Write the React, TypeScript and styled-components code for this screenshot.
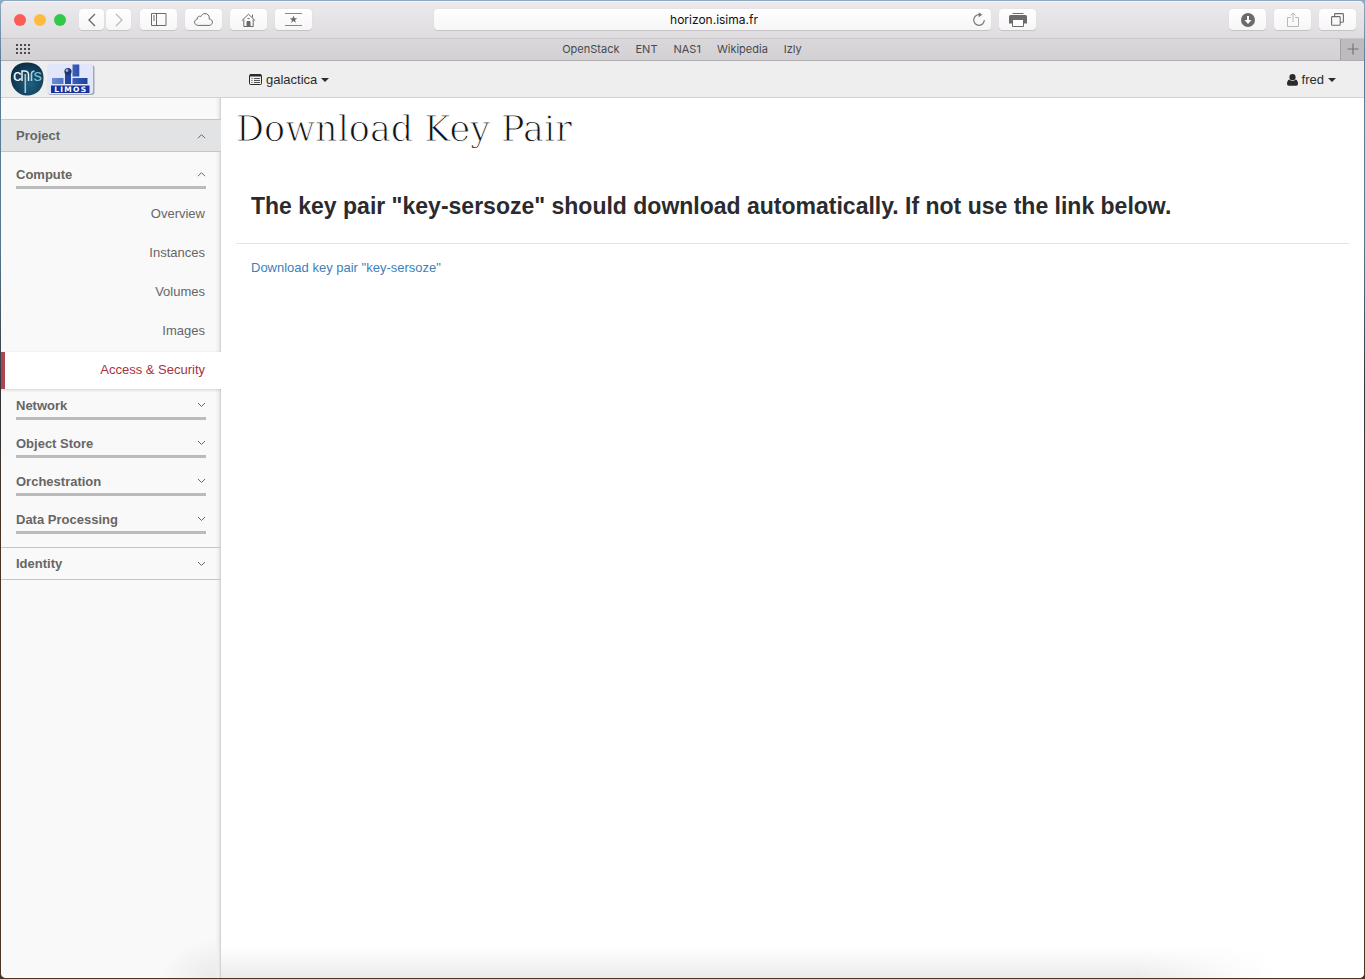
import React from "react";
import styled, { createGlobalStyle } from "styled-components";

const GlobalStyle = createGlobalStyle`
  *, *::before, *::after { box-sizing: border-box; }
  body {
    margin: 0;
    font-family: "Liberation Sans", Helvetica, Arial, sans-serif;
    font-size: 13px;
    line-height: 18px;
    color: #2b2b2d;
  }
  button, input { font: inherit; color: inherit; margin: 0; padding: 0; border: 0; background: none; }
  button { cursor: pointer; }
  a { text-decoration: none; color: inherit; }
  ul { list-style: none; margin: 0; padding: 0; }
  h1, h2, h3 { margin: 0; }
  svg { display: block; flex: none; }
`;

const Desktop = styled.div`
  min-height: 100vh;
  display: flex;
  padding: 1px;
  background: linear-gradient(#8fa9c0 0, #5b7f99 60px, #56788f 25%, #2f3338 40%, #4a3320 55%, #4b3626 100%);
`;

const BrowserWindow = styled.div`
  flex: 1;
  min-width: 0;
  display: flex;
  flex-direction: column;
  border-radius: 5px;
  overflow: hidden;
  background: #fff;
`;

const Toolbar = styled.div`
  display: flex;
  align-items: center;
  height: 37px;
  padding: 0 8px 0 13px;
  background: linear-gradient(#edeaed, #dfdcdf);
  box-shadow: inset 0 1px 0 #f6f5f6;
`;

const TrafficLights = styled.div`
  display: flex;
  gap: 8px;
  margin-right: 13px;
`;

const Light = styled.button<{ $color: string }>`
  width: 12px;
  height: 12px;
  border-radius: 50%;
  background: ${(p) => p.$color};
`;

const ButtonGroup = styled.div`
  display: flex;
  gap: 8px;
`;

const HistoryButtons = styled(ButtonGroup)`
  gap: 2px;
  margin-right: 1px;
`;

const ToolButton = styled.button<{ $narrow?: boolean; $muted?: boolean }>`
  display: flex;
  align-items: center;
  justify-content: center;
  width: ${(p) => (p.$narrow ? 25 : 37)}px;
  height: 21px;
  border-radius: 4px;
  color: ${(p) => (p.$muted ? "#b9b8ba" : "#6b6a6d")};
  background: linear-gradient(#fff, #f7f6f7);
  box-shadow: 0 1px 0 #c6c3c6, 0 0 1px #c9c6c9;
`;

const AddressField = styled.form`
  flex: 1;
  display: flex;
  align-items: center;
  height: 21px;
  margin: 0 8px 0 122px;
  padding: 0 5px 0 22px;
  border-radius: 4px;
  background: linear-gradient(#fff, #f7f6f7);
  box-shadow: 0 1px 0 #c6c3c6, 0 0 1px #c9c6c9;
`;

const AddressInput = styled.input`
  flex: 1;
  min-width: 0;
  height: 21px;
  text-align: center;
  color: #111;
  font-family: Inter, sans-serif;
  font-size: 12px;
  outline: none;
`;

const ReloadButton = styled.button`
  color: #77767a;
`;

const RightTools = styled(ButtonGroup)`
  margin-left: 193px;
`;

const BookmarksBar = styled.div`
  display: flex;
  align-items: stretch;
  height: 23px;
  background: linear-gradient(#dad7da, #d4d1d5);
  border-top: 1px solid #cac7ca;
  border-bottom: 1px solid #afadb0;
`;

const GridButton = styled.button`
  width: 24px;
  margin-left: 14px;
  padding-bottom: 2px;
  color: #4a494c;
`;

const Bookmarks = styled.nav`
  flex: 1;
  display: flex;
  justify-content: center;
  align-items: center;
  gap: 16px;
  margin-right: 15px;
  padding-bottom: 2px;
  font-family: Inter, sans-serif;
  font-size: 11px;
  color: #49484b;
`;

const NewTabButton = styled.button`
  display: flex;
  align-items: center;
  justify-content: center;
  width: 24px;
  padding-bottom: 2px;
  background: #bebbbf;
  border-left: 1px solid #a19fa2;
  color: #747376;
`;

const NavBar = styled.header`
  display: flex;
  align-items: center;
  height: 37px;
  padding: 0 28px 0 9px;
  background: #eee;
  border-bottom: 1px solid #d2d2d3;
`;

const Brand = styled.a`
  display: flex;
  gap: 2px;
  width: 239px;
`;

const MenuButton = styled.button<{ $end?: boolean }>`
  display: flex;
  align-items: center;
  gap: 4px;
  padding-top: 1px;
  margin-left: ${(p) => (p.$end ? "auto" : "0")};
`;

const Columns = styled.div`
  flex: 1;
  display: flex;
`;

const Sidebar = styled.nav`
  width: 220px;
  flex: none;
  padding-top: 21px;
  color: #666;
  background:
    linear-gradient(to left, #c4c4c4 0, #e3e3e3 1px, #f1f1f1 3px, rgba(249, 249, 249, 0) 6px),
    radial-gradient(60px 40px at bottom right, #e9e9e9, rgba(249, 249, 249, 0)),
    #f9f9f9;
`;

const SectionHeader = styled.button<{ $active?: boolean }>`
  display: flex;
  justify-content: space-between;
  align-items: center;
  width: 100%;
  height: 33px;
  padding: 1px 15px 0;
  font-weight: bold;
  border-top: 1px solid #c5c6c7;
  border-bottom: 1px solid #c5c6c7;
  background: ${(p) => (p.$active ? "#e2e3e5" : "transparent")};
`;

const Groups = styled.div`
  padding-top: 6px;
  padding-bottom: 6px;
`;

const GroupHeader = styled.button`
  display: flex;
  justify-content: space-between;
  align-items: center;
  width: 190px;
  height: 31px;
  margin: 0 15px 7px;
  padding-top: 5px;
  font-weight: bold;
  border-bottom: 3px solid #bbb;
`;

const Item = styled.a<{ $active?: boolean }>`
  display: block;
  height: ${(p) => (p.$active ? 37 : 39)}px;
  padding-right: 16px;
  line-height: 36px;
  text-align: right;
  color: ${(p) => (p.$active ? "#a5323e" : "#666")};
  background: ${(p) => (p.$active ? "#fff" : "transparent")};
  border-left: 4px solid ${(p) => (p.$active ? "#ad4450" : "transparent")};
  box-shadow: ${(p) => (p.$active ? "0 1px 3px rgba(0, 0, 0, 0.16)" : "none")};
  clip-path: ${(p) => (p.$active ? "inset(-1px 0 -4px 0)" : "none")};
`;

const Content = styled.main`
  flex: 1;
  min-width: 0;
  padding: 0 15px;
  background:
    linear-gradient(to right, rgba(255, 255, 255, 0) 80%, #fff 92%) bottom / 100% 32px no-repeat,
    linear-gradient(#fff, #ebebeb) bottom / 100% 32px no-repeat,
    #fff;
`;

const PageTitle = styled.h1`
  font-family: "DejaVu Serif", serif;
  font-size: 35px;
  font-weight: normal;
  line-height: 62px;
  color: #111;
  -webkit-text-stroke: 1px #fff;
`;

const ModalHeader = styled.div`
  padding: 29px 15px 20px;
  border-bottom: 1px solid #e5e5e5;
`;

const ModalTitle = styled.h2`
  font-size: 23px;
  line-height: 34px;
  color: #2b2b2d;
`;

const ModalBody = styled.div`
  padding: 15px;
`;

const DownloadLink = styled.a`
  color: #3c7fbb;
`;

const line = { fill: "none", stroke: "currentColor" } as const;

const Chevron = ({ up }: { up?: boolean }) => (
  <svg width="9" height="7" viewBox="0 0 9 7" {...line}>
    <path d={up ? "M1 5.200 4.500 1.700 8 5.200" : "M1 1 4.500 4.500 8 1"} />
  </svg>
);

const Caret = () => (
  <svg width="8" height="4" viewBox="0 0 8 4" fill="currentColor">
    <path d="M0 0h8L4 4z" />
  </svg>
);

const CnrsLogo = () => (
  <svg width="34" height="34" viewBox="0 0 34 34" role="img" aria-label="CNRS">
    <defs>
      <radialGradient id="cnrs" cx="60%" cy="65%" r="65%">
        <stop offset="0" stopColor="#1d6080" />
        <stop offset="1" stopColor="#0d2f49" />
      </radialGradient>
    </defs>
    <path d="M17 .5C27 .5 33.5 6 33.5 16 33.5 27 27 33.5 17 33.5 8 33.5 1 26 .8 16 .7 6 7 .5 17 .5z" fill="url(#cnrs)" />
    <text x="3" y="19" fontFamily="Liberation Sans, sans-serif" fontSize="17" fill="#fff">c</text>
    <path d="M12 19v-10h2.500q4 0 4 4V19" fill="none" stroke="#e7f3f7" strokeWidth="1.5" />
    <path d="M15.300 12v19" stroke="#a3c8d8" strokeWidth="1.6" />
    <path d="M21.500 19v-7q0-3 3-2.700" fill="none" stroke="#a9d3df" strokeWidth="1.6" />
    <text x="23.500" y="19" fontFamily="Liberation Sans, sans-serif" fontSize="17" fill="#7dc0d0">s</text>
  </svg>
);

const LimosLogo = () => (
  <svg width="49" height="34" viewBox="0 0 49 34" role="img" aria-label="LIMOS">
    <defs>
      <linearGradient id="limosBlue" x1="0" x2="1">
        <stop offset="0" stopColor="#6c8fd6" />
        <stop offset="1" stopColor="#1c3e9e" />
      </linearGradient>
    </defs>
    <rect x="2" y="3" width="46.5" height="30" rx="3" fill="#a5a6af" />
    <rect x="1" y="1.5" width="46" height="30.500" rx="3" fill="#e2e6fb" />
    <path d="M26.5 2.5h6.8v12h-6.8zM6 16h11.5v6H6zM26.5 16h15v6h-15z" fill="url(#limosBlue)" />
    <path d="M19 12h6v10h-6z" fill="#2546a4" />
    <circle cx="22" cy="9.5" r="3.6" fill="#20346e" />
    <circle cx="21" cy="8.5" r="1.4" fill="#9fb0dc" />
    <rect x="5" y="23.500" width="38.5" height="7.500" fill="#15339c" />
    <text x="24.800" y="30" textAnchor="middle" fontFamily="DejaVu Sans, sans-serif" fontWeight="bold" fontSize="7.5" letterSpacing="1.3" fill="#fff">LIMOS</text>
  </svg>
);

const bookmarks = ["OpenStack", "ENT", "NAS1", "Wikipedia", "Izly"];
const computeItems = ["Overview", "Instances", "Volumes", "Images", "Access & Security"];
const closedGroups = ["Network", "Object Store", "Orchestration", "Data Processing"];

export default function App() {
  return (
    <Desktop>
      <GlobalStyle />
      <BrowserWindow>
        <Toolbar>
          <TrafficLights>
            <Light $color="#fc5b57" aria-label="Close" />
            <Light $color="#fdbc40" aria-label="Minimize" />
            <Light $color="#34c84a" aria-label="Zoom" />
          </TrafficLights>
          <ButtonGroup>
            <HistoryButtons>
              <ToolButton $narrow aria-label="Back">
                <svg width="8" height="14" viewBox="0 0 8 14" {...line} strokeWidth="1.4"><path d="M7 1 1 7l6 6" /></svg>
              </ToolButton>
              <ToolButton $narrow $muted aria-label="Forward">
                <svg width="8" height="14" viewBox="0 0 8 14" {...line} strokeWidth="1.2"><path d="m1 1 6 6-6 6" /></svg>
              </ToolButton>
            </HistoryButtons>
            <ToolButton aria-label="Show sidebar">
              <svg width="16" height="13" viewBox="0 0 16 13" {...line}><path d="M.5.5h14.500v12H.5zM5.500.5v12M2 3h2M2 5h2M2 7h2" /></svg>
            </ToolButton>
            <ToolButton aria-label="iCloud tabs">
              <svg width="19" height="13" viewBox="0 0 19 13" {...line}><path d="M4.300 12.400C2 12.400.6 11 .6 9.200c0-1.600 1.200-2.800 2.600-3C3 4.400 4.200 3.200 5.700 3.200c.5 0 1 .1 1.300.4C7.700 1.700 9.200.6 11 .6c2.600 0 4.300 2 4.300 4.400 0 .4 0 .8-.1 1.100 1.900 0 3.200 1.300 3.200 3.100 0 1.800-1.400 3.200-3.300 3.200z" /></svg>
            </ToolButton>
            <ToolButton aria-label="Home">
              <svg width="15" height="14" viewBox="0 0 15 14" {...line}><path d="M.8 7.700 7.500 1.200l6.700 6.500M2.800 6.500v7h9.400v-7M11.500 4.500V1.500" /><path d="M6 13V8.500h3V13" fill="currentColor" /><path d="M6.500 5.500h2" /></svg>
            </ToolButton>
            <ToolButton aria-label="Top sites">
              <svg width="17" height="13" viewBox="0 0 17 13"><path d="M0 .5h17M0 12.500h17" {...line} strokeWidth=".8" /><path d="m8.500 2.600 1 2.700h2.800L10 7l.9 2.800-2.400-1.700L6.100 9.800 7 7 4.700 5.300h2.800z" fill="currentColor" /></svg>
            </ToolButton>
          </ButtonGroup>
          <AddressField onSubmit={(e) => e.preventDefault()}>
            <AddressInput aria-label="Address" defaultValue="horizon.isima.fr" />
            <ReloadButton type="button" aria-label="Reload">
              <svg width="14" height="15" viewBox="0 0 14 15" {...line} strokeWidth="1.2"><path d="M12.300 8A5.300 5.300 0 1 1 7 2.700h2" /><path d="m6.700.3 3.600 2.400-3.600 2.500z" fill="currentColor" stroke="none" /></svg>
            </ReloadButton>
          </AddressField>
          <ToolButton aria-label="Print">
            <svg width="18" height="14" viewBox="0 0 18 14"><path d="M3.500 .5h11" stroke="currentColor" /><path d="M1.500 2h15Q18 2 18 3.500V10.500h-3V7H3v3.500H0V3.500Q0 2 1.500 2z" fill="currentColor" /><path d="M3.500 6.500h11v7h-11z" fill="#fff" stroke="currentColor" /></svg>
          </ToolButton>
          <RightTools>
            <ToolButton aria-label="Downloads">
              <svg width="14" height="14" viewBox="0 0 14 14"><circle cx="7" cy="7" r="7" fill="currentColor" /><path d="M6 3h2v4h2.500L7 11 3.500 7H6z" fill="#fff" /></svg>
            </ToolButton>
            <ToolButton $muted aria-label="Share">
              <svg width="12" height="16" viewBox="0 0 12 16" {...line}><path d="M4 5.500H.5v9h11v-9H8M6 10V1M3.500 3.500 6 1l2.500 2.500" /></svg>
            </ToolButton>
            <ToolButton aria-label="Show all tabs">
              <svg width="13" height="13" viewBox="0 0 13 13" {...line} strokeWidth="1.1"><path d="M.6 4.400Q.6 3.600 1.400 3.600h7q.8 0 .8.8v7q0 .8-.8.8h-7q-.8 0-.8-.8zM3.600 3.500V1.400q0-.8.800-.8h7.200q.8 0 .8.8v7q0 .8-.8.8H9.400" /></svg>
            </ToolButton>
          </RightTools>
        </Toolbar>

        <BookmarksBar>
          <GridButton aria-label="Favorites">
            <svg width="15" height="10" viewBox="0 0 15 10" fill="currentColor">
              {[0, 4, 8].map((y) => [0, 4, 8, 12].map((x) => <rect key={`${x}-${y}`} x={x + 1} y={y} width="2" height="2" />))}
            </svg>
          </GridButton>
          <Bookmarks>
            {bookmarks.map((name) => <a key={name} href="#">{name}</a>)}
          </Bookmarks>
          <NewTabButton aria-label="New tab">
            <svg width="12" height="12" viewBox="0 0 12 12" {...line} strokeWidth="1.2"><path d="M6 .5v11M.5 6h11" /></svg>
          </NewTabButton>
        </BookmarksBar>

        <NavBar>
          <Brand href="#"><CnrsLogo /><LimosLogo /></Brand>
          <MenuButton>
            <svg width="13" height="11" viewBox="0 0 13 11" {...line}><rect x=".5" y=".5" width="12" height="10" rx="1" /><path d="M1 1.500h11" strokeWidth="2" /><path d="M2.500 4.500h1M5 4.500h6M2.500 6.500h1M5 6.500h6M2.500 8.500h1M5 8.500h6" strokeWidth=".8" /></svg>
            galactica
            <Caret />
          </MenuButton>
          <MenuButton $end>
            <svg width="11" height="12" viewBox="0 0 11 12" fill="currentColor"><circle cx="5.500" cy="3.200" r="3.100" /><path d="M2.500 5.500Q0 6 0 10q0 1.700 1.800 1.700h7.400Q11 11.700 11 10q0-4-2.500-4.500Q5.500 8.500 2.500 5.500z" /></svg>
            fred
            <Caret />
          </MenuButton>
        </NavBar>

        <Columns>
          <Sidebar>
            <SectionHeader $active>Project<Chevron up /></SectionHeader>
            <Groups>
              <GroupHeader>Compute<Chevron up /></GroupHeader>
              <ul>
                {computeItems.map((name) => (
                  <li key={name}><Item href="#" $active={name === "Access & Security"}>{name}</Item></li>
                ))}
              </ul>
              {closedGroups.map((name) => <GroupHeader key={name}>{name}<Chevron /></GroupHeader>)}
            </Groups>
            <SectionHeader>Identity<Chevron /></SectionHeader>
          </Sidebar>
          <Content>
            <PageTitle>Download Key Pair</PageTitle>
            <ModalHeader>
              <ModalTitle>The key pair "key-sersoze" should download automatically. If not use the link below.</ModalTitle>
            </ModalHeader>
            <ModalBody>
              <DownloadLink href="#">Download key pair "key-sersoze"</DownloadLink>
            </ModalBody>
          </Content>
        </Columns>
      </BrowserWindow>
    </Desktop>
  );
}
